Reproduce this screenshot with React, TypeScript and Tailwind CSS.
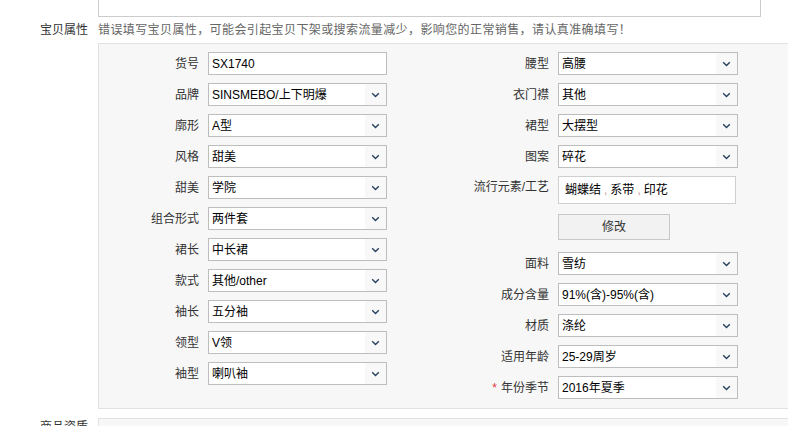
const leftRows: [string, string][] = [
  ['品牌', 'SINSMEBO/上下明爆'],
  ['廓形', 'A型'],
  ['风格', '甜美'],
  ['甜美', '学院'],
  ['组合形式', '两件套'],
  ['裙长', '中长裙'],
  ['款式', '其他/other'],
  ['袖长', '五分袖'],
  ['领型', 'V领'],
  ['袖型', '喇叭袖'],
];

const rightTop: [string, string][] = [
  ['腰型', '高腰'],
  ['衣门襟', '其他'],
  ['裙型', '大摆型'],
  ['图案', '碎花'],
];

const rightBottom: [string, string, boolean?][] = [
  ['面料', '雪纺'],
  ['成分含量', '91%(含)-95%(含)'],
  ['材质', '涤纶'],
  ['适用年龄', '25-29周岁'],
  ['年份季节', '2016年夏季', true],
];

function Chevron() {
  return (
    <svg width="9" height="6" viewBox="0 0 9 6" fill="none">
      <path d="M1.2 1.3 L4.5 4.5 L7.8 1.3" stroke="#27405f" strokeWidth="1.4" />
    </svg>
  );
}

function Select({ value, width }: { value: string; width: string }) {
  return (
    <div className={`${width} h-[23px] border border-[#bdbdbd] bg-white flex items-center`}>
      <span className="flex-1 pl-[3px] truncate text-[#000]">{value}</span>
      <div className="w-[21px] h-full bg-[#f8f8f8] flex items-center justify-center">
        <Chevron />
      </div>
    </div>
  );
}

function Label({ text, width, required }: { text: string; width: string; required?: boolean }) {
  return (
    <div className={`${width} text-right text-[#333] shrink-0`}>
      {required && <span className="text-[#e4393c] mr-[4px]">*</span>}
      {text}
    </div>
  );
}

export default function App() {
  return (
    <div
      className="w-[788px] h-[426px] overflow-hidden bg-white text-[12px] leading-[16px]"
      style={{ fontFamily: '"Liberation Sans", "Noto Sans CJK SC", sans-serif' }}
    >
      <div className="ml-[98px] w-[663px] h-[17px] border border-t-0 border-[#cccccc] bg-white" />

      <div className="flex h-[26px] items-center">
        <div className="w-[98px] pr-[10px] text-right text-[#333]">宝贝属性</div>
        <div className="text-[12px] tracking-[0.4px] text-[#666] whitespace-nowrap">
          错误填写宝贝属性，可能会引起宝贝下架或搜索流量减少，影响您的正常销售，请认真准确填写！
        </div>
      </div>

      <div className="flex">
        <div className="w-[98px] shrink-0" />
        <div className="flex-1 border border-r-0 border-[#e2e2e2] bg-[#f7f7f7] pt-[8px] pb-[9px] flex">
          <div className="w-[288px] shrink-0 flex flex-col gap-[8px]">
            <div className="flex items-center gap-[9px] h-[23px]">
              <Label text="货号" width="w-[100px]" />
              <div className="w-[179px] h-[23px] border border-[#bdbdbd] bg-white flex items-center pl-[3px] text-[#000]">
                SX1740
              </div>
            </div>
            {leftRows.map(([l, v]) => (
              <div key={l} className="flex items-center gap-[9px] h-[23px]">
                <Label text={l} width="w-[100px]" />
                <Select value={v} width="w-[179px]" />
              </div>
            ))}
          </div>

          <div className="w-[351px] shrink-0 flex flex-col">
            <div className="flex flex-col gap-[8px]">
              {rightTop.map(([l, v]) => (
                <div key={l} className="flex items-center gap-[9px] h-[23px]">
                  <Label text={l} width="w-[162px]" />
                  <Select value={v} width="w-[180px]" />
                </div>
              ))}
            </div>

            <div className="flex items-start gap-[9px] mt-[8px]">
              <div className="w-[162px] h-[23px] leading-[23px] text-right text-[#333] shrink-0">流行元素/工艺</div>
              <div className="w-[178px] h-[28px] border border-[#cfcfcf] bg-white flex items-center pl-[6px] text-[#000]">
                蝴蝶结<span className="text-[#c8a0a0] mx-[3px]">,</span>系带<span className="text-[#c8a0a0] mx-[3px]">,</span>印花
              </div>
            </div>

            <div className="flex gap-[9px] mt-[10px]">
              <div className="w-[162px] shrink-0" />
              <button className="w-[112px] h-[26px] border border-[#c8c8c8] bg-[#f2f2f2] text-[#333] text-[12px]">
                修改
              </button>
            </div>

            <div className="flex flex-col gap-[8px] mt-[12px]">
              {rightBottom.map(([l, v, req]) => (
                <div key={l} className="flex items-center gap-[9px] h-[23px]">
                  <Label text={l} width="w-[162px]" required={req} />
                  <Select value={v} width="w-[180px]" />
                </div>
              ))}
            </div>
          </div>
        </div>
      </div>

      <div className="flex mt-[9px]">
        <div className="w-[98px] pr-[10px] pt-[1px] text-right text-[#333] shrink-0">商品资质</div>
        <div className="flex-1 h-[60px] border border-r-0 border-[#e2e2e2] bg-[#f7f7f7]" />
      </div>
    </div>
  );
}
